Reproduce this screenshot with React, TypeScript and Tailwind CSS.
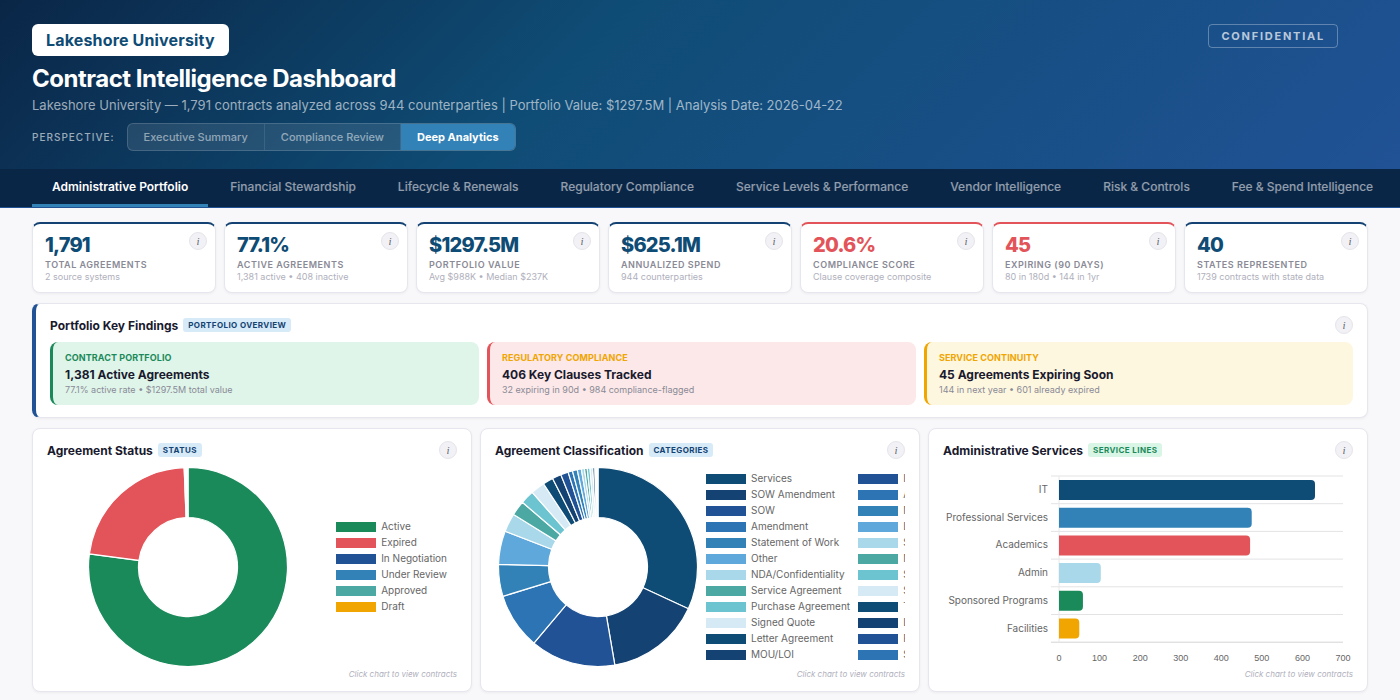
import { useState } from 'react';
import type { ReactNode } from 'react';
import clsx from 'clsx';

const PERSPECTIVES = ['Executive Summary', 'Compliance Review', 'Deep Analytics'];

const TABS = [
  'Administrative Portfolio',
  'Financial Stewardship',
  'Lifecycle & Renewals',
  'Regulatory Compliance',
  'Service Levels & Performance',
  'Vendor Intelligence',
  'Risk & Controls',
  'Fee & Spend Intelligence',
];

const KPIS = [
  { value: '1,791', label: 'Total Agreements', sub: '2 source systems' },
  { value: '77.1%', label: 'Active Agreements', sub: '1,381 active • 408 inactive' },
  { value: '$1297.5M', label: 'Portfolio Value', sub: 'Avg $988K • Median $237K' },
  { value: '$625.1M', label: 'Annualized Spend', sub: '944 counterparties' },
  { value: '20.6%', label: 'Compliance Score', sub: 'Clause coverage composite', alert: true },
  { value: '45', label: 'Expiring (90 Days)', sub: '80 in 180d • 144 in 1yr', alert: true },
  { value: '40', label: 'States Represented', sub: '1739 contracts with state data' },
];

const FINDINGS = [
  {
    label: 'Contract Portfolio',
    title: '1,381 Active Agreements',
    sub: '77.1% active rate • $1297.5M total value',
    box: 'bg-[#dff5ea] border-[#1b8a5a]',
    text: 'text-[#1b8a5a]',
  },
  {
    label: 'Regulatory Compliance',
    title: '406 Key Clauses Tracked',
    sub: '32 expiring in 90d • 984 compliance-flagged',
    box: 'bg-[#fce8e8] border-[#e25459]',
    text: 'text-[#f0a500]',
  },
  {
    label: 'Service Continuity',
    title: '45 Agreements Expiring Soon',
    sub: '144 in next year • 601 already expired',
    box: 'bg-[#fef7e0] border-[#f0a500]',
    text: 'text-[#f0a500]',
  },
];

type Slice = { label: string; value: number; color: string };

const STATUS: Slice[] = [
  { label: 'Active', value: 1381, color: '#1b8a5a' },
  { label: 'Expired', value: 399, color: '#e25459' },
  { label: 'In Negotiation', value: 3, color: '#205295' },
  { label: 'Under Review', value: 3, color: '#3282b8' },
  { label: 'Approved', value: 3, color: '#4ba8a3' },
  { label: 'Draft', value: 2, color: '#f0a500' },
];

const CATEGORIES: Slice[] = [
  { label: 'Services', value: 571, color: '#0f4c75' },
  { label: 'SOW Amendment', value: 276, color: '#144272' },
  { label: 'SOW', value: 248, color: '#205295' },
  { label: 'Amendment', value: 163, color: '#2c74b3' },
  { label: 'Statement of Work', value: 93, color: '#3282b8' },
  { label: 'Other', value: 97, color: '#5fa8dc' },
  { label: 'NDA/Confidentiality', value: 54, color: '#a8d8ea' },
  { label: 'Service Agreement', value: 43, color: '#4ba8a3' },
  { label: 'Purchase Agreement', value: 40, color: '#6cc4d0' },
  { label: 'Signed Quote', value: 41, color: '#d6eaf5' },
  { label: 'Letter Agreement', value: 30, color: '#0f4c75' },
  { label: 'MOU/LOI', value: 26, color: '#144272' },
  { label: 'Invoice', value: 22, color: '#205295' },
  { label: 'Addendum', value: 13, color: '#2c74b3' },
  { label: 'Memo', value: 14, color: '#3282b8' },
  { label: 'Lease', value: 12, color: '#5fa8dc' },
  { label: 'Subscription', value: 9, color: '#a8d8ea' },
  { label: 'Master', value: 8, color: '#4ba8a3' },
  { label: 'Software', value: 8, color: '#6cc4d0' },
  { label: 'Sponsorship', value: 8, color: '#d6eaf5' },
  { label: 'Terms', value: 6, color: '#0f4c75' },
  { label: 'Letter', value: 3, color: '#144272' },
  { label: 'Renewal', value: 3, color: '#205295' },
  { label: 'Supplier', value: 3, color: '#2c74b3' },
];

const SERVICES: Slice[] = [
  { label: 'IT', value: 631, color: '#0f4c75' },
  { label: 'Professional Services', value: 475, color: '#3282b8' },
  { label: 'Academics', value: 471, color: '#e25459' },
  { label: 'Admin', value: 103, color: '#a8d8ea' },
  { label: 'Sponsored Programs', value: 59, color: '#1b8a5a' },
  { label: 'Facilities', value: 50, color: '#f0a500' },
];

function InfoButton({ label }: { label: string }) {
  return (
    <button
      type="button"
      aria-label={`About ${label}`}
      className="flex size-[18px] shrink-0 items-center justify-center rounded-full border border-[#e4e4ea] bg-[#f2f2f6] font-['Liberation_Serif',serif] text-[11px] leading-none text-[#66666f] italic"
    >
      i
    </button>
  );
}

function Badge({ children, green = false }: { children: ReactNode; green?: boolean }) {
  return (
    <span
      className={clsx(
        'rounded-[3px] px-[5px] text-[8px] leading-[14px] font-bold tracking-wider uppercase',
        green ? 'bg-[#d8f5e6] text-[#1b8a5a]' : 'bg-[#d6eaf8] text-[#144272]',
      )}
    >
      {children}
    </span>
  );
}

function CardHeader({ title, badge, green }: { title: string; badge: string; green?: boolean }) {
  return (
    <div className="mb-2 flex h-[18px] items-center gap-[5px]">
      <h2 className="pt-0.5 text-[12px] leading-[18px] font-bold text-[#1a1a2e]">{title}</h2>
      <Badge green={green}>{badge}</Badge>
      <div className="ml-auto">
        <InfoButton label={title} />
      </div>
    </div>
  );
}

function ChartCard({ title, badge, green, children }: { title: string; badge: string; green?: boolean; children: ReactNode }) {
  return (
    <section className="min-w-0 rounded-lg border border-[#e6e6ee] bg-white px-3.5 pt-3 pb-[11px] shadow-[0_1px_3px_rgba(0,0,0,0.05)]">
      <CardHeader title={title} badge={badge} green={green} />
      {children}
      <p className="mt-px text-right text-[8px] leading-[12px] text-[#b0b0bc] italic">Click chart to view contracts</p>
    </section>
  );
}

function arcPath(start: number, end: number, outer: number, inner: number) {
  const at = (r: number, a: number) => `${100 + r * Math.sin(a)} ${100 - r * Math.cos(a)}`;
  const large = end - start > Math.PI ? 1 : 0;
  return `M${at(outer, start)} A${outer} ${outer} 0 ${large} 1 ${at(outer, end)} L${at(inner, end)} A${inner} ${inner} 0 ${large} 0 ${at(inner, start)} Z`;
}

function Donut({ data, title }: { data: Slice[]; title: string }) {
  const total = data.reduce((sum, d) => sum + d.value, 0);
  let angle = 0;
  return (
    <svg viewBox="0 0 200 200" role="img" aria-label={title} className="size-[200px] shrink-0">
      {data.map((d) => {
        const start = angle;
        angle += (d.value / total) * Math.PI * 2;
        return <path key={d.label} d={arcPath(start, angle, 99.5, 49.5)} fill={d.color} stroke="#fff" strokeWidth="1.2" />;
      })}
    </svg>
  );
}

function Legend({ data }: { data: Slice[] }) {
  return (
    <ul className="shrink-0">
      {data.map((d) => (
        <li key={d.label} className="flex h-4 items-center gap-[5px] text-[10px] leading-[14px] whitespace-nowrap text-[#666]">
          <span className="h-[10px] w-10" style={{ backgroundColor: d.color }} />
          <span className="pb-0.5">{d.label}</span>
        </li>
      ))}
    </ul>
  );
}

function ServicesChart() {
  const left = 116;
  const width = 284;
  const top = 9;
  const row = 27.7;
  const x = (v: number) => left + (v / 700) * width;
  return (
    <svg viewBox="0 0 410 200" role="img" aria-label="Administrative Services" className="block w-full">
      {[0, 1, 2, 3, 4, 5, 6].map((i) => (
        <line key={i} x1={left - 8} x2={left + width} y1={top + i * row} y2={top + i * row} stroke={i === 6 ? '#d4d4d8' : '#e3e3e6'} />
      ))}
      <line x1={left} x2={left} y1={top} y2={top + 6 * row} stroke="#e8e8e8" />
      {SERVICES.map((d, i) => {
        const y = top + i * row + 4;
        const end = x(d.value);
        return (
          <g key={d.label}>
            <text x={left - 11} y={y + 13} textAnchor="end" fill="#666" className="text-[10px]">
              {d.label}
            </text>
            <path d={`M${left} ${y} H${end - 4} a4 4 0 0 1 4 4 V${y + 16} a4 4 0 0 1 -4 4 H${left} Z`} fill={d.color} />
          </g>
        );
      })}
      {[0, 100, 200, 300, 400, 500, 600, 700].map((v) => (
        <text key={v} x={x(v)} y="194" textAnchor="middle" fill="#666" className="font-['Liberation_Sans',sans-serif] text-[9px]">
          {v}
        </text>
      ))}
    </svg>
  );
}

export default function App() {
  const [perspective, setPerspective] = useState('Deep Analytics');
  const [tab, setTab] = useState('Administrative Portfolio');

  return (
    <div className="min-h-screen bg-[#f8f8fb] font-['Inter',sans-serif] text-[#1a1a2e]">
      <header className="flex items-start justify-between bg-[linear-gradient(135deg,#0a2647_0%,#0f4c75_40%,#205295_100%)] px-8 pt-6 pb-[18px]">
        <div>
          <div className="inline-block rounded-md bg-white px-3.5 text-[16px] leading-8 font-bold tracking-[0.01em] text-[#0f4c75]">
            Lakeshore University
          </div>
          <h1 className="mt-2 text-[24px] leading-[30px] font-bold tracking-[-0.02em] text-white">Contract Intelligence Dashboard</h1>
          <p className="mt-0.5 text-[13px] leading-[18px] text-white/60">
            Lakeshore University — 1,791 contracts analyzed across 944 counterparties | Portfolio Value: $1297.5M | Analysis Date: 2026-04-22
          </p>
          <div className="mt-[9px] flex items-center gap-3">
            <span className="text-[10px] font-medium tracking-widest text-white/60 uppercase">Perspective:</span>
            <div className="flex h-7 overflow-hidden rounded-md border border-white/15 bg-white/10">
              {PERSPECTIVES.map((p) => (
                <button
                  key={p}
                  type="button"
                  onClick={() => setPerspective(p)}
                  className={clsx(
                    'border-r border-white/10 px-4 text-[11px] last:border-r-0',
                    p === perspective ? 'bg-[#3282b8] font-bold text-white' : 'font-medium text-white/50',
                  )}
                >
                  {p}
                </button>
              ))}
            </div>
          </div>
        </div>
        <div className="mr-[30px] rounded border border-white/30 px-3 text-[11px] leading-[22px] font-bold tracking-[0.16em] text-white/70">
          CONFIDENTIAL
        </div>
      </header>

      <nav className="flex h-[39px] gap-0.5 overflow-hidden border-b border-[#205295] bg-[#0a2647] px-8">
        {TABS.map((t) => (
          <button
            key={t}
            type="button"
            onClick={() => setTab(t)}
            className={clsx(
              'shrink-0 border-b-[3px] px-5 text-[12px] whitespace-nowrap',
              t === tab ? 'border-[#3282b8] font-semibold text-white' : 'border-transparent font-medium text-white/55',
            )}
          >
            {t}
          </button>
        ))}
      </nav>

      <main className="flex flex-col gap-2.5 px-8 pt-3.5 pb-2">
        <div className="grid grid-cols-7 gap-2">
          {KPIS.map((k) => (
            <div
              key={k.label}
              className={clsx(
                'flex items-start justify-between rounded-lg border border-t-2 border-[#e6e6ee] bg-white pr-2 pl-3 shadow-[0_1px_3px_rgba(0,0,0,0.05)]',
                k.alert ? 'border-t-[#e25459]' : 'border-t-[#144272]',
              )}
            >
              <div className="min-w-0 pt-2.5 pb-[9px] whitespace-nowrap">
                <div className={clsx('text-[20px] leading-[22px] font-extrabold tracking-[-0.04em]', k.alert ? 'text-[#e25459]' : 'text-[#0f4c75]')}>
                  {k.value}
                </div>
                <div className="mt-[3px] text-[9px] leading-[12px] font-semibold tracking-[0.06em] text-[#8a8a96] uppercase">{k.label}</div>
                <div className="text-[9px] leading-[12px] text-[#b0b0bc]">{k.sub}</div>
              </div>
              <div className="-ml-5 pt-2">
                <InfoButton label={k.label} />
              </div>
            </div>
          ))}
        </div>

        <section className="rounded-lg border border-l-4 border-[#e6e6ee] border-l-[#205295] bg-white px-3.5 py-3 shadow-[0_1px_3px_rgba(0,0,0,0.05)]">
          <CardHeader title="Portfolio Key Findings" badge="Portfolio Overview" />
          <div className="grid grid-cols-3 gap-2">
            {FINDINGS.map((f) => (
              <div key={f.label} className={clsx('rounded-lg border-l-[3px] px-3 pt-2.5 pb-[9px]', f.box)}>
                <div className={clsx('text-[9px] leading-[12px] font-bold tracking-[0.01em] uppercase', f.text)}>{f.label}</div>
                <div className="mt-0.5 text-[12px] leading-[18px] font-bold">{f.title}</div>
                <div className="text-[9px] leading-[12px] text-[#8a8a96]">{f.sub}</div>
              </div>
            ))}
          </div>
        </section>

        <div className="grid grid-cols-3 gap-2">
          <ChartCard title="Agreement Status" badge="Status">
            <div className="flex h-[200px] items-center pr-2.5">
              <div className="flex flex-1 justify-center pr-[7px]">
                <Donut data={STATUS} title="Agreement Status" />
              </div>
              <Legend data={STATUS} />
            </div>
          </ChartCard>

          <ChartCard title="Agreement Classification" badge="Categories">
            <div className="flex h-[200px] items-center gap-2 overflow-hidden pl-[3px]">
              <Donut data={CATEGORIES} title="Agreement Classification" />
              <div className="flex gap-2">
                <Legend data={CATEGORIES.slice(0, 12)} />
                <Legend data={CATEGORIES.slice(12)} />
              </div>
            </div>
          </ChartCard>

          <ChartCard title="Administrative Services" badge="Service Lines" green>
            <ServicesChart />
          </ChartCard>
        </div>
      </main>
    </div>
  );
}
